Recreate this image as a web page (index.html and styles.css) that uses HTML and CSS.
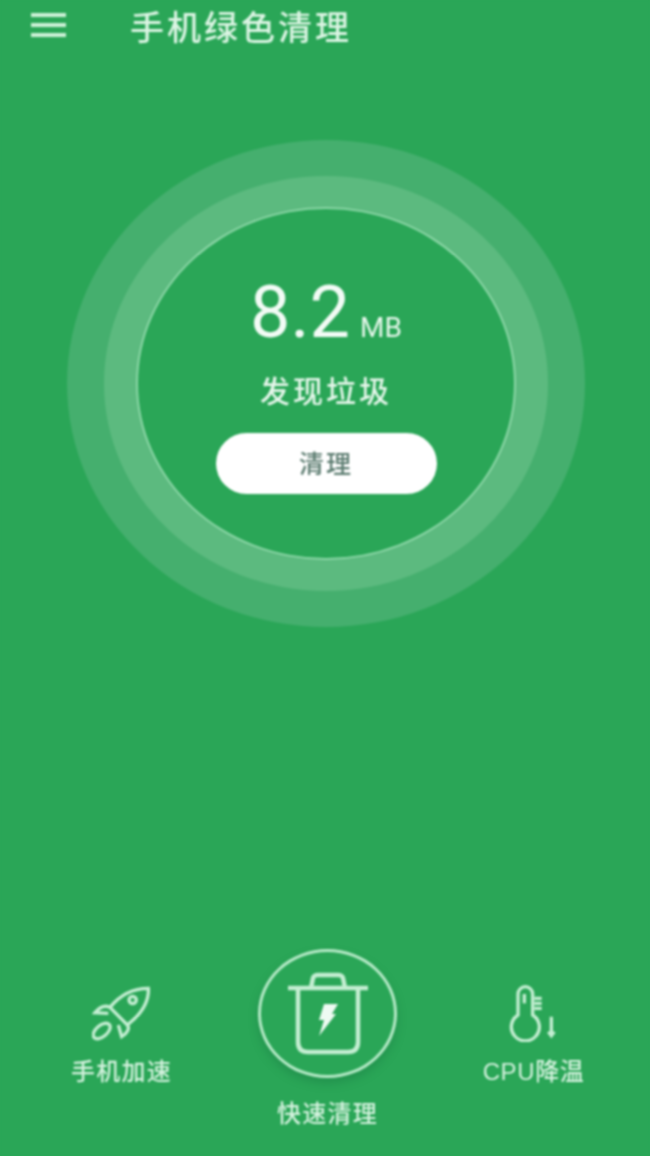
FILE: index.html
```html
<!DOCTYPE html>
<html>
  <head>
    <title>手机绿色清理</title>
    <link rel="stylesheet" href="styles.css">
  </head>
  <body>
    <div class="page">
      <div class="header">
        <div class="menu"><span></span><span></span><span></span></div>
        <div class="title">手机绿色清理</div>
      </div>

      <div class="hero">
        <div class="ring-outer">
          <div class="ring-mid">
            <div class="ring-inner">
              <div class="amount"><span class="num">8.2</span><span class="unit">MB</span></div>
              <div class="found">发现垃圾</div>
              <button class="clean">清理</button>
            </div>
          </div>
        </div>
      </div>

      <div class="nav">
        <div class="nav-item side">
          <div class="icon-box">
            <svg class="icon" width="60" height="56" viewBox="126 48 180 168">
              <path d="M295 55C250 55 210 75 180 112L232 165C270 135 298 100 295 55Z"/>
              <circle cx="248" cy="90" r="11"/>
              <path d="M180 112C165 105 150 110 135 128L175 130"/>
              <path d="M232 165C240 175 232 190 215 200L205 165"/>
              <ellipse cx="155" cy="183" rx="30" ry="17" transform="rotate(-40 155 183)"/>
            </svg>
          </div>
          <div class="label">手机加速</div>
        </div>

        <div class="nav-item">
          <div class="main-btn">
            <svg class="icon thin" width="84" height="84" viewBox="0 0 84 84">
              <path d="M2 16H82"/>
              <path d="M25 16L27 6Q28 3 32 3H52Q56 3 57 6L59 16"/>
              <path d="M12 16V70Q12 80 22 80H62Q72 80 72 70V16"/>
              <path class="bolt" d="M38 32H52L46 42H50L33 64L38 48H33Z"/>
            </svg>
          </div>
          <div class="label main-label">快速清理</div>
        </div>

        <div class="nav-item side">
          <div class="icon-box">
            <svg class="icon" width="55" height="60" viewBox="105 36 165 180">
              <path d="M141 135V72a22 22 0 0 1 44 0V135a42 42 0 1 1-44 0Z"/>
              <path d="M160 72V100"/>
              <path d="M190 85H212M190 100H212M190 115H212"/>
              <path d="M241 140V195M232 185L241 197L250 185"/>
            </svg>
          </div>
          <div class="label cpu">CPU降温</div>
        </div>
      </div>
    </div>
  </body>
</html>
```

FILE: styles.css
```css
body { margin: 0; background: #2aa657; font-family: "Liberation Sans", "Noto Sans CJK SC", sans-serif; }

.page { width: 650px; height: 1156px; overflow: hidden; background: #2aa657; color: #e6f7eb; filter: blur(0.8px); display: flex; flex-direction: column; }

.header { height: 56px; padding-left: 31px; display: flex; align-items: center; gap: 64px; }
.menu { width: 35px; display: flex; flex-direction: column; gap: 6px; margin-bottom: 6px; }
.menu span { height: 4px; background: #cdf1d8; }
.title { font-size: 34px; font-weight: 500; letter-spacing: 3px; line-height: 56px; color: #dcf5e4; }

.hero { margin-top: 84px; padding-left: 2px; display: flex; justify-content: center; }
.ring-outer { width: 518px; height: 487px; border-radius: 50%; background: #45af6e; display: flex; align-items: center; justify-content: center; }
.ring-mid { width: 444px; height: 415px; border-radius: 50%; background: #5cba7f; display: flex; align-items: center; justify-content: center; }
.ring-inner { width: 380px; height: 353px; box-sizing: border-box; border: 2px solid #8bd6a6; border-radius: 50%; background: #2aa657; display: flex; flex-direction: column; align-items: center; padding-top: 62px; }

.amount { display: flex; align-items: baseline; gap: 10px; font-family: Roboto, sans-serif; line-height: 84px; }
.num { font-size: 72px; color: #f2fbf5; }
.unit { font-size: 28px; }
.found { font-size: 30px; font-weight: 500; letter-spacing: 3px; line-height: 44px; }
.clean { width: 221px; height: 61px; margin-top: 19px; padding-bottom: 4px; border: none; border-radius: 31px; background: #fff; color: #5c7c70; font-family: inherit; font-size: 25px; font-weight: 500; letter-spacing: 2px; }

.nav { margin-top: 322px; padding: 0 66px 0 71px; display: flex; justify-content: space-between; align-items: flex-start; }
.nav-item { display: flex; flex-direction: column; align-items: center; }
.side { padding-top: 33px; width: 101px; }
.icon-box { height: 60px; display: flex; align-items: flex-end; }
.label { font-size: 24px; font-weight: 500; line-height: 34px; letter-spacing: 1.3px; white-space: nowrap; margin-top: 13px; color: #d4f2de; }
.main-label { margin-top: 19px; }
.cpu { letter-spacing: 0.6px; }

.main-btn { width: 139px; height: 129px; box-sizing: border-box; border: 3px solid #b4e9c6; border-radius: 50%; box-shadow: 0 5px 10px rgba(20, 110, 60, 0.35); display: flex; align-items: center; justify-content: center; }

.icon { fill: none; stroke: #c4eed2; stroke-width: 10; }
.thin { stroke-width: 4.5; }
.bolt { fill: #eefaf2; stroke: none; }
```
